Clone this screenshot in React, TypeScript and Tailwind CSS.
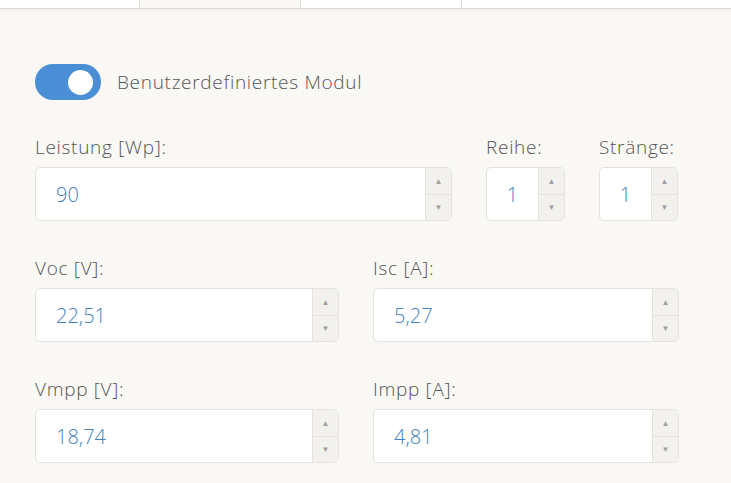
import { useState } from "react"

interface NumberFieldProps {
  label: string
  value: string
  width: string
  center?: boolean
}

function Spinner() {
  return (
    <div className="flex w-[26px] flex-col border-l border-[#e4e3df] bg-[#f2f1ee]">
      <div className="flex flex-1 items-center justify-center border-b border-[#e4e3df] text-[8px] text-[#a0a0a0]">
        ▲
      </div>
      <div className="flex flex-1 items-center justify-center text-[8px] text-[#a0a0a0]">▼</div>
    </div>
  )
}

function NumberField({ label, value, width, center }: NumberFieldProps) {
  return (
    <div className={width}>
      <div className="h-[26px] text-[19px] font-light leading-[26px] tracking-[0.7px] whitespace-nowrap text-[#555555]">
        {label}
      </div>
      <div className="mt-[7px] flex h-[54px] overflow-hidden rounded-[5px] border border-[#e4e3df] bg-white">
        <div
          className={`flex flex-1 items-center pt-[1px] text-[20px] font-light text-[#4482bb] ${
            center ? "justify-center" : "pl-[20px]"
          }`}
        >
          {value}
        </div>
        <Spinner />
      </div>
    </div>
  )
}

export default function App() {
  const [custom, setCustom] = useState(true)

  return (
    <div className="h-[483px] w-[731px] overflow-hidden bg-[#f9f8f5] font-['Open_Sans',sans-serif]">
      <div className="flex h-[9px] border-b border-[#dedcd7] bg-white">
        <div className="w-[140px] border-r border-[#dedcd7]" />
        <div className="w-[161px] border-r border-[#dedcd7] bg-[#f9f8f5]" />
        <div className="w-[161px] border-r border-[#dedcd7]" />
        <div className="flex-1" />
      </div>
      <div className="h-[4px] bg-gradient-to-b from-[#f1f0ec] to-[#f9f8f5]" />

      <div className="px-[35px] pt-[51px]">
        <div className="flex h-[36px] items-center gap-[16px]">
          <button
            onClick={() => setCustom(!custom)}
            className={`flex h-[36px] w-[66px] items-center rounded-full px-[8px] ${
              custom ? "justify-end bg-[#4a8ed5]" : "justify-start bg-[#d6d5d1]"
            }`}
          >
            <span className="block h-[25px] w-[25px] rounded-full bg-white" />
          </button>
          <span className="text-[19px] font-light tracking-[0.7px] text-[#555555]">Benutzerdefiniertes Modul</span>
        </div>

        <div className="mt-[34px] flex gap-[34px]">
          <NumberField label="Leistung [Wp]:" value="90" width="w-[417px]" />
          <NumberField label="Reihe:" value="1" width="w-[79px]" center />
          <NumberField label="Stränge:" value="1" width="w-[79px]" center />
        </div>

        <div className="mt-[34px] flex gap-[34px]">
          <NumberField label="Voc [V]:" value="22,51" width="w-[304px]" />
          <NumberField label="Isc [A]:" value="5,27" width="w-[306px]" />
        </div>

        <div className="mt-[34px] flex gap-[34px]">
          <NumberField label="Vmpp [V]:" value="18,74" width="w-[304px]" />
          <NumberField label="Impp [A]:" value="4,81" width="w-[306px]" />
        </div>
      </div>
    </div>
  )
}
